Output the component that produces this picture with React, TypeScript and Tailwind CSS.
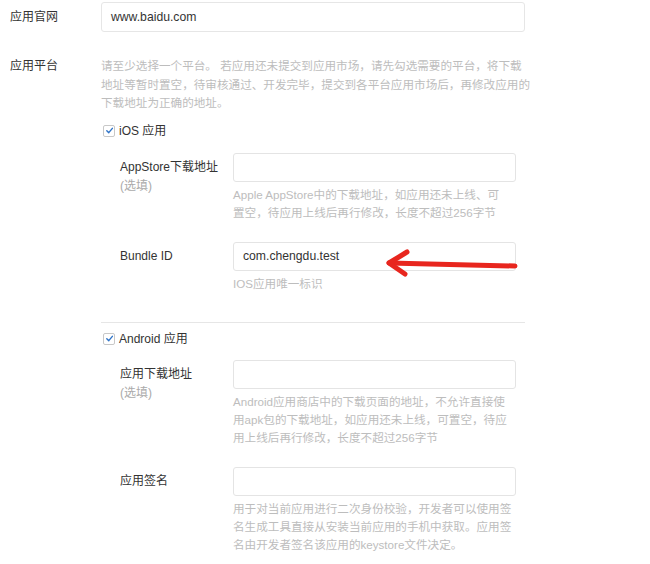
import { Fragment } from "react"

const font = "font-['Liberation_Sans','Noto_Sans_CJK_SC',sans-serif]"

function Help({ lines, className = "" }: { lines: string[]; className?: string }) {
  return (
    <div className={`text-[11.6px] leading-[18px] text-[#bdbdbd] whitespace-nowrap ${className}`}>
      {lines.map((l, i) => (
        <Fragment key={i}>
          {l}
          {i < lines.length - 1 && <br />}
        </Fragment>
      ))}
    </div>
  )
}

function Checkbox({ label }: { label: string }) {
  return (
    <div className="flex items-center h-[18px] pl-[2px]">
      <span className="shrink-0 w-[12px] h-[12px] rounded-[2px] border border-[#c8c8c8] bg-white flex items-center justify-center">
        <svg width="9" height="9" viewBox="0 0 10 10">
          <path d="M2 5.2 L4.2 7.4 L8.2 2.6" fill="none" stroke="#2f74c8" strokeWidth="1.6" strokeLinecap="round" strokeLinejoin="round" />
        </svg>
      </span>
      <span className="ml-[4px] text-[12px] text-[#333]">{label}</span>
    </div>
  )
}

function Field({
  label,
  optional,
  value,
  help,
  className = "",
  children,
}: {
  label: string
  optional?: boolean
  value?: string
  help: string[]
  className?: string
  children?: React.ReactNode
}) {
  return (
    <div className={`flex ${className}`}>
      <div className="shrink-0 w-[132px] pl-[19px] pt-[5px] text-[12px] leading-[19px] whitespace-nowrap">
        <div className="text-[#333]">{label}</div>
        {optional && <div className="text-[#aaa]">(选填)</div>}
      </div>
      <div className="relative shrink-0">
        <div className="w-[283px] h-[29px] border border-[#e4e4e4] rounded-[3px] bg-white flex items-center pl-[9px] text-[12.2px] text-[#333]">
          {value}
        </div>
        <Help lines={help} className="mt-[4px]" />
        {children}
      </div>
    </div>
  )
}

export default function App() {
  return (
    <div className={`relative w-[650px] h-[564px] bg-white overflow-hidden pt-[2px] ${font}`}>
      <div className="flex">
        <div className="shrink-0 w-[101px] pl-[10px] text-[12px] leading-[30px] text-[#333]">应用官网</div>
        <div className="shrink-0 w-[424px] h-[30px] border border-[#e6e6e6] rounded-[3px] flex items-center pl-[9px] text-[12.2px] text-[#333]">
          www.baidu.com
        </div>
      </div>

      <div className="flex mt-[25px]">
        <div className="shrink-0 w-[101px] pl-[10px] text-[12px] leading-[18.5px] text-[#333]">应用平台</div>
        <div className="text-[11.6px] leading-[18.5px] text-[#bdbdbd] whitespace-nowrap">
          请至少选择一个平台。 若应用还未提交到应用市场，请先勾选需要的平台，将下载
          <br />
          地址等暂时置空，待审核通过、开发完毕，提交到各平台应用市场后，再修改应用的
          <br />
          下载地址为正确的地址。
        </div>
      </div>

      <div className="pl-[101px]">
        <div className="mt-[9px]">
          <Checkbox label="iOS 应用" />
        </div>

        <Field
          className="mt-[13px]"
          label="AppStore下载地址"
          optional
          help={["Apple AppStore中的下载地址，如应用还未上线、可", "置空，待应用上线后再行修改，长度不超过256字节"]}
        />

        <Field className="mt-[20px]" label="Bundle ID" value="com.chengdu.test" help={["IOS应用唯一标识"]}>
          <svg className="absolute left-[147px] top-[-2px]" width="145" height="40" viewBox="0 0 145 40">
            <g stroke="#e8261e" strokeWidth="5" strokeLinecap="round" strokeLinejoin="round" fill="none">
              <path d="M9 23 L135 26" />
              <path d="M27 12 L9 23 L25 34" />
            </g>
          </svg>
        </Field>

        <div className="mt-[29px] w-[424px] h-px bg-[#e6e6e6]" />

        <div className="mt-[7px]">
          <Checkbox label="Android 应用" />
        </div>

        <Field
          className="mt-[12px]"
          label="应用下载地址"
          optional
          help={[
            "Android应用商店中的下载页面的地址，不允许直接使",
            "用apk包的下载地址，如应用还未上线，可置空，待应",
            "用上线后再行修改，长度不超过256字节",
          ]}
        />

        <Field
          className="mt-[20px]"
          label="应用签名"
          help={[
            "用于对当前应用进行二次身份校验，开发者可以使用签",
            "名生成工具直接从安装当前应用的手机中获取。应用签",
            "名由开发者签名该应用的keystore文件决定。",
          ]}
        />
      </div>
    </div>
  )
}
